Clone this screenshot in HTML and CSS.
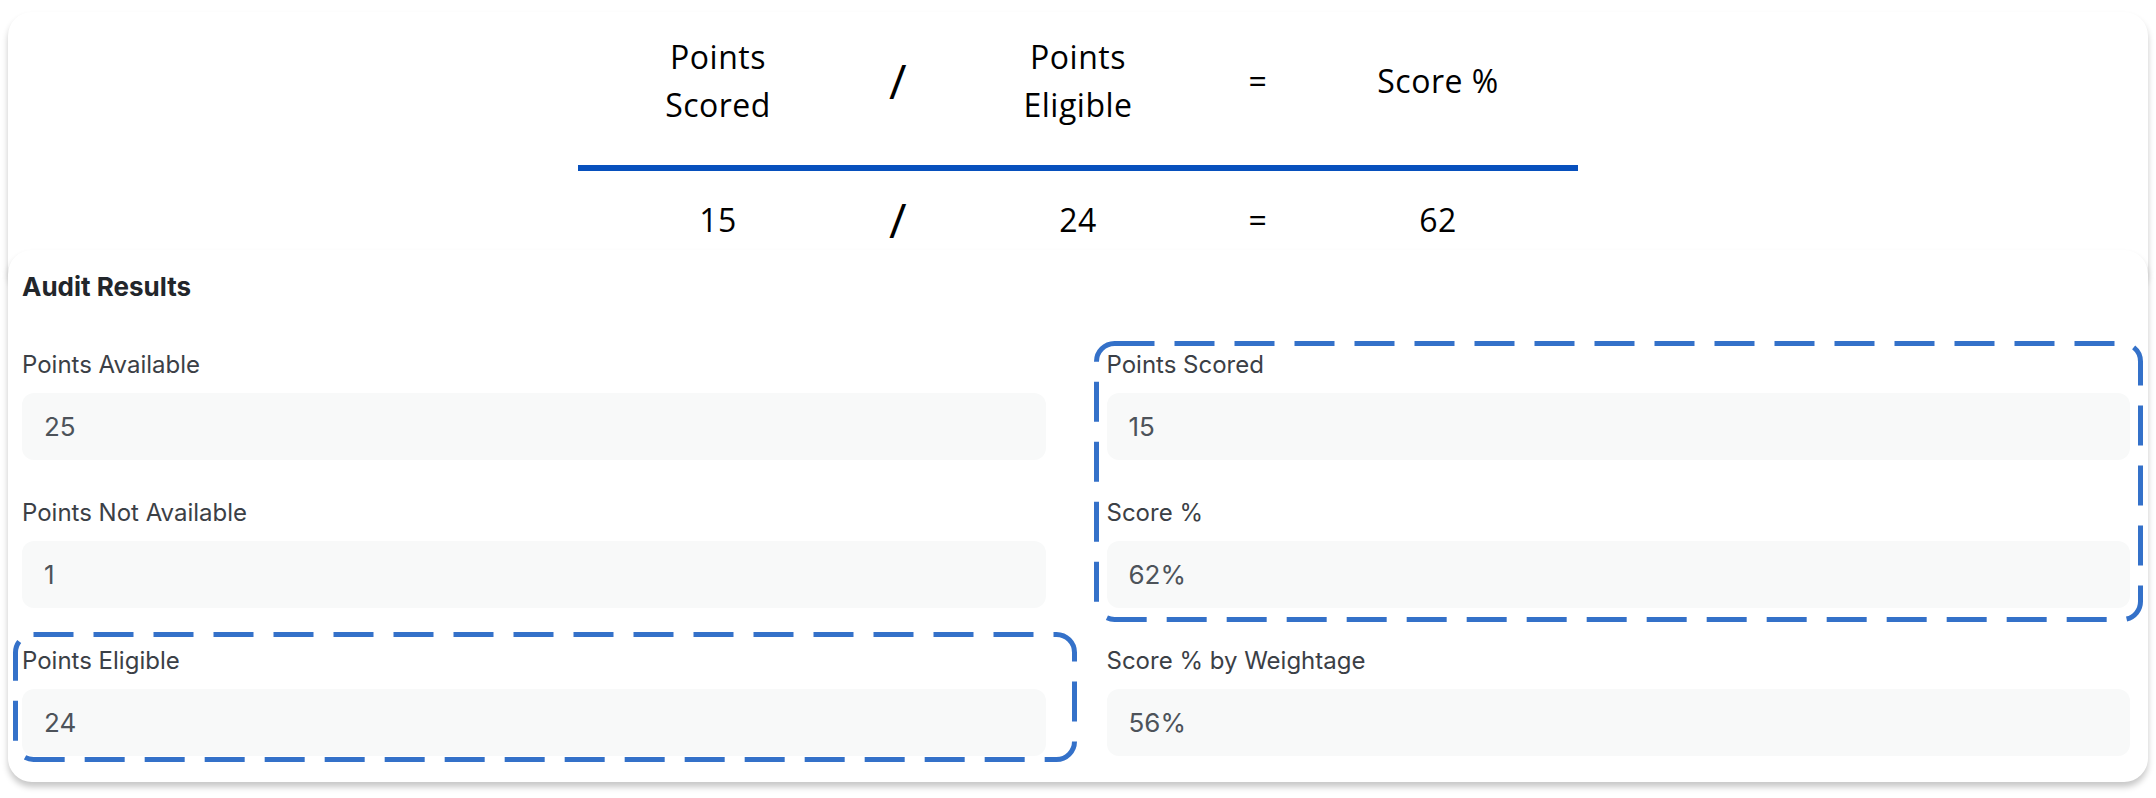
FILE: index.html
```html
<!DOCTYPE html>
<html lang="en">
<head>
  <meta charset="UTF-8">
  <title>Audit Results</title>
  <link rel="stylesheet" href="styles.css">
</head>
<body>
  <div class="page">
    <div class="card formula-card">
      <div class="formula">
        <div class="formula-row heads">
          <div class="term">Points<br>Scored</div>
          <div class="op slash">/</div>
          <div class="term">Points<br>Eligible</div>
          <div class="op">=</div>
          <div class="term">Score %</div>
        </div>
        <div class="formula-row values">
          <div class="term">15</div>
          <div class="op slash">/</div>
          <div class="term">24</div>
          <div class="op">=</div>
          <div class="term">62</div>
        </div>
      </div>
    </div>

    <div class="card results-card">
      <h3>Audit Results</h3>
      <div class="fields">
        <div class="field">
          <label>Points Available</label>
          <div class="value">25</div>
        </div>
        <div class="field">
          <label>Points Scored</label>
          <div class="value">15</div>
        </div>
        <div class="field">
          <label>Points Not Available</label>
          <div class="value">1</div>
        </div>
        <div class="field">
          <label>Score %</label>
          <div class="value">62%</div>
        </div>
        <div class="field">
          <label>Points Eligible</label>
          <div class="value">24</div>
        </div>
        <div class="field">
          <label>Score % by Weightage</label>
          <div class="value">56%</div>
        </div>
      </div>

      <!-- highlight marks drawn over the fields -->
      <svg class="mark mark-score" width="1049" height="281">
        <rect x="2.5" y="2.5" width="1044" height="276" rx="18" />
      </svg>
      <svg class="mark mark-eligible" width="1064" height="130">
        <rect x="2.5" y="2.5" width="1059" height="125" rx="18" />
      </svg>
    </div>
  </div>
</body>
</html>
```

FILE: styles.css
```css
* {
  margin: 0;
  padding: 0;
  box-sizing: border-box;
}

html, body {
  width: 100%;
  height: 100%;
  background: #ffffff;
  overflow: hidden;
}

.page {
  padding: 12px 8px 16px;
}

.card {
  background: #ffffff;
  border-radius: 24px;
  box-shadow: 0 5px 6px rgba(0, 0, 0, 0.22);
}

.formula-card {
  height: 278px;
  padding-top: 21px;
}

.formula {
  width: 1000px;
  margin: 0 auto;
  font-family: 'Open Sans', sans-serif;
  font-weight: 500;
  font-size: 32px;
  line-height: 48px;
  letter-spacing: 0.5px;
  color: #000000;
}

.formula-row {
  display: grid;
  grid-template-columns: repeat(5, 180px);
  align-items: center;
  padding: 0 50px;
  text-align: center;
}

.heads {
  padding-bottom: 36px;
  border-bottom: 6px solid #0750bd;
}

.values {
  padding-top: 25px;
}

.op.slash {
  font-size: 48px;
  font-weight: 400;
}

.results-card {
  position: relative;
  margin-top: -40px;
  padding: 21px 18px 26px 14px;
  font-family: 'Inter', sans-serif;
}

.results-card h3 {
  font-size: 26px;
  font-weight: 700;
  color: #22262b;
  margin-bottom: 48px;
}

.fields {
  display: grid;
  grid-template-columns: 1fr 1fr;
  column-gap: 61px;
  row-gap: 38px;
}

.field label {
  display: block;
  font-size: 24px;
  color: #3b4046;
  margin-bottom: 14px;
}

.value {
  height: 67px;
  display: flex;
  align-items: center;
  padding: 0 22px;
  background: #f8f9f9;
  border-radius: 12px;
  font-size: 26px;
  color: #4d535a;
}

.mark {
  position: absolute;
  pointer-events: none;
}

.mark rect {
  fill: none;
  stroke: #3471c9;
  stroke-width: 5;
  stroke-dasharray: 40 20;
}

.mark-score {
  left: 1086px;
  top: 91px;
}

.mark-eligible {
  left: 5px;
  top: 382px;
}
```
